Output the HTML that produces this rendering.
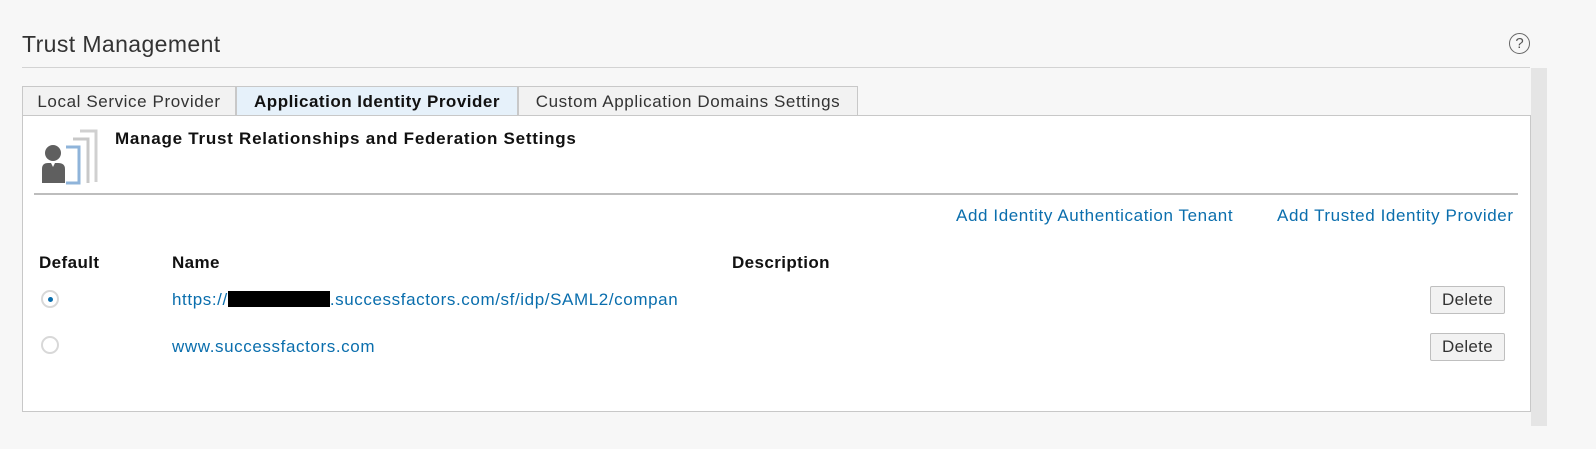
<!DOCTYPE html>
<html><head><meta charset="utf-8"><style>
body{margin:0;width:1596px;height:449px;background:#f7f7f7;font-family:"Liberation Sans",Arial,sans-serif;position:relative;overflow:hidden;letter-spacing:0.6px}
.abs{position:absolute;white-space:nowrap}
a{color:#0a6ead;text-decoration:none}
.f{font-size:17px}
.tab{position:absolute;top:86px;height:29px;border:1px solid #c8c8c8;border-bottom:none;background:#f2f2f2;font-size:17px;color:#333;line-height:30px;box-sizing:border-box;text-align:center;white-space:nowrap}
.btn{position:absolute;left:1430px;width:75px;height:28px;border:1px solid #bfbfbf;background:#f2f2f2;border-radius:2px;box-sizing:border-box;font-size:17px;color:#333;text-align:center;line-height:26px;letter-spacing:0.3px}
.radio{position:absolute;left:41px;width:18px;height:18px;border-radius:50%;border:2px solid #d8d8d8;background:#fff;box-sizing:border-box}
</style></head><body>
<div class="abs" style="left:22px;top:31px;font-size:23px;color:#333;letter-spacing:0.4px">Trust Management</div>
<div class="abs" style="left:1509px;top:33px;width:21px;height:21px;border:1px solid #666;border-radius:50%;box-sizing:border-box;font-size:15px;line-height:19px;text-align:center;color:#555;letter-spacing:0">?</div>
<div class="abs" style="left:22px;top:67px;width:1508px;height:1px;background:#d3d3d3"></div>
<div class="abs" style="left:1531px;top:68px;width:16px;height:358px;background:#e5e5e5"></div>
<div class="tab" style="left:22px;width:214px">Local Service Provider</div>
<div class="tab" style="left:236px;width:282px;background:#e6f1fa;font-weight:bold;color:#111;letter-spacing:0.5px">Application Identity Provider</div>
<div class="tab" style="left:518px;width:340px">Custom Application Domains Settings</div>
<div class="abs" style="left:22px;top:115px;width:1509px;height:297px;background:#fff;border:1px solid #c8c8c8;box-sizing:border-box"></div>
<svg class="abs" style="left:36px;top:126px" width="66" height="62">
<path d="M44 5H60V56" fill="none" stroke="#d0d0d0" stroke-width="3"/>
<path d="M37 13H52V57" fill="none" stroke="#c8c8c8" stroke-width="3"/>
<path d="M30 21H43V57H30" fill="none" stroke="#8fb4da" stroke-width="3"/>
<circle cx="17" cy="27" r="8" fill="#5f5f5f"/>
<path d="M6 57V43Q6 37 12 37H22Q29 37 29 43V57Z" fill="#5f5f5f"/>
<path d="M15 37L17 41L19 37" fill="#fff"/>
</svg>
<div class="abs f" style="left:115px;top:129px;font-weight:bold;color:#111;letter-spacing:0.75px">Manage Trust Relationships and Federation Settings</div>
<div class="abs" style="left:34px;top:193px;width:1484px;height:2px;background:#bdbdbd"></div>
<a class="abs f" style="left:956px;top:206px">Add Identity Authentication Tenant</a>
<a class="abs f" style="left:1277px;top:206px">Add Trusted Identity Provider</a>
<div class="abs f" style="left:39px;top:253px;font-weight:bold;color:#111;letter-spacing:0.4px">Default</div>
<div class="abs f" style="left:172px;top:253px;font-weight:bold;color:#111;letter-spacing:0.4px">Name</div>
<div class="abs f" style="left:732px;top:253px;font-weight:bold;color:#111;letter-spacing:0.4px">Description</div>
<div class="radio" style="top:290px"><div style="position:absolute;left:5px;top:5px;width:5px;height:5px;border-radius:50%;background:#0a6ead"></div></div>
<div class="radio" style="top:336px"></div>
<a class="abs f" style="left:172px;top:290px">https://<span style="display:inline-block;width:102px;height:16px;background:#000;vertical-align:-2px"></span>.successfactors.com/sf/idp/SAML2/compan</a>
<a class="abs f" style="left:172px;top:337px">www.successfactors.com</a>
<div class="btn" style="top:286px">Delete</div>
<div class="btn" style="top:333px">Delete</div>
</body></html>
